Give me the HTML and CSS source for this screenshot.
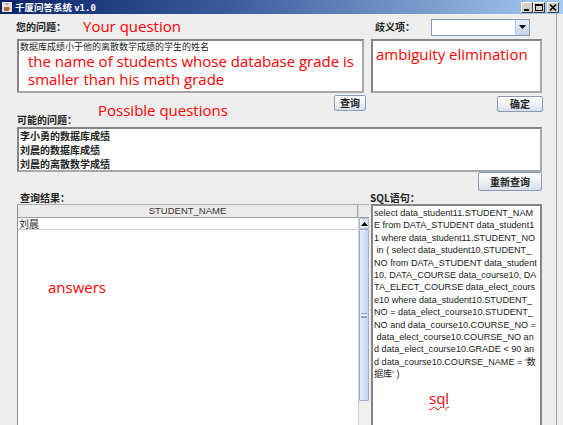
FILE: index.html
```html
<!DOCTYPE html>
<html>
<head>
<meta charset="utf-8">
<link rel="stylesheet" href="styles.css">
</head>
<body>
<div class="window">
  <div class="titlebar">
    <svg class="app-icon" width="10" height="10" viewBox="0 0 10 10">
      <rect x="0" y="0" width="10" height="10" fill="#e8e4dc"/>
      <path d="M2 5 h5 v3 a1 1 0 0 1 -1 1 h-3 a1 1 0 0 1 -1 -1z" fill="#c0603a"/>
      <path d="M7 6 h1 v1 h-1" stroke="#c0603a" stroke-width="0.8" fill="none"/>
      <path d="M4 1 q1 1 0 2 M5.5 1.5 q1 1 0 2" stroke="#5a6a9a" stroke-width="0.7" fill="none"/>
    </svg>
    <span class="title">千厦问答系统 <span class="ver">v1.0</span></span>
    <div class="win-btns">
      <div class="win-btn"><svg width="10" height="9" viewBox="0 0 10 9"><rect x="2" y="6" width="5" height="2" fill="#000"/></svg></div>
      <div class="win-btn"><svg width="10" height="9" viewBox="0 0 10 9"><rect x="1.5" y="1.5" width="7" height="6" fill="none" stroke="#000" stroke-width="1"/><rect x="1" y="1" width="8" height="2" fill="#000"/></svg></div>
      <div class="win-btn close"><svg width="10" height="9" viewBox="0 0 10 9"><path d="M2 1.5 L8 7.5 M8 1.5 L2 7.5" stroke="#000" stroke-width="1.6"/></svg></div>
    </div>
  </div>

  <div class="main">
    <div class="row-labels">
      <div class="left-col">
        <span class="label">您的问题：</span>
        <span class="note note-q">Your question</span>
      </div>
      <div class="right-col">
        <span class="label amb-label">歧义项：</span>
        <div class="combo">
          <div class="combo-field"></div>
          <div class="combo-arrow"><svg width="7" height="4" viewBox="0 0 7 4"><path d="M0 0 H7 L3.5 4z" fill="#000"/></svg></div>
        </div>
      </div>
    </div>

    <div class="row-areas">
      <div class="textarea question">
        <div class="cn-text">数据库成绩小于他的离散数学成绩的学生的姓名</div>
        <div class="note note-block">the name of students whose database grade is<br>smaller than his math grade</div>
      </div>
      <div class="textarea ambiguity">
        <div class="note">ambiguity elimination</div>
      </div>
    </div>

    <div class="row-mid">
      <div class="mid-left">
        <span class="label possible-label">可能的问题：</span>
        <span class="note note-p">Possible questions</span>
        <button class="btn btn-query">查询</button>
      </div>
      <div class="mid-right">
        <button class="btn btn-ok">确定</button>
      </div>
    </div>

    <div class="list">
      <div class="list-item">李小勇的数据库成绩</div>
      <div class="list-item">刘晨的数据库成绩</div>
      <div class="list-item">刘晨的离散数学成绩</div>
    </div>

    <div class="row-requery">
      <button class="btn btn-requery">重新查询</button>
    </div>

    <div class="row-labels2">
      <span class="label result-label">查询结果：</span>
      <span class="label sql-label">SQL语句：</span>
    </div>

    <div class="row-bottom">
      <div class="table-pane">
        <div class="table-main">
          <div class="thead">STUDENT_NAME</div>
          <div class="trow">刘晨</div>
          <div class="tbody-rest">
            <span class="note note-a">answers</span>
          </div>
        </div>
        <div class="vscroll">
          <div class="corner"></div>
          <div class="sb-up"><svg width="7" height="4" viewBox="0 0 7 4"><path d="M0 4 H7 L3.5 0z" fill="#000"/></svg></div>
          <div class="sb-thumb">
            <div class="grip"></div>
          </div>
          <div class="sb-track"></div>
        </div>
      </div>
      <div class="sql-area">
        <div class="sql-text">select data_student11.STUDENT_NAM<br>E from DATA_STUDENT data_student1<br>1 where data_student11.STUDENT_NO<br>&nbsp;in ( select data_student10.STUDENT_<br>NO from DATA_STUDENT data_student<br>10, DATA_COURSE data_course10, DA<br>TA_ELECT_COURSE data_elect_cours<br>e10 where data_student10.STUDENT_<br>NO = data_elect_course10.STUDENT_<br>NO and data_course10.COURSE_NO =<br>&nbsp;data_elect_course10.COURSE_NO an<br>d data_elect_course10.GRADE &lt; 90 an<br>d data_course10.COURSE_NAME = '数<br>据库' )</div>
        <div class="note note-sql">sql</div>
      </div>
    </div>
  </div>
</div>
</body>
</html>
```

FILE: styles.css
```css
* { box-sizing: border-box; }

body {
  margin: 0;
  width: 563px;
  height: 425px;
  overflow: hidden;
  background: #eeeeee;
  font-family: "Noto Sans CJK SC", "Liberation Sans", sans-serif;
}

.window {
  width: 563px;
  height: 425px;
  display: flex;
  flex-direction: column;
}

.titlebar {
  height: 14px;
  flex: none;
  display: flex;
  align-items: center;
  padding: 0 4px 0 2px;
  background: linear-gradient(to right, #0a246a 0%, #3a5a9a 40%, #a6caf0 100%);
}

.app-icon { flex: none; }

.title {
  color: #ffffff;
  font-weight: bold;
  font-size: 9.5px;
  line-height: 14px;
  margin-left: 3px;
  white-space: nowrap;
}

.title .ver {
  font-family: "DejaVu Sans Mono", monospace;
  font-size: 9px;
}

.win-btns {
  margin-left: auto;
  display: flex;
}

.win-btn {
  width: 12px;
  height: 11px;
  background: #d4d0c8;
  border: 1px solid;
  border-color: #ffffff #404040 #404040 #ffffff;
  display: flex;
  align-items: center;
  justify-content: center;
}

.win-btn svg { display: block; }
.win-btn.close { margin-left: 2px; }

.main {
  flex: 1;
  width: 557px;
  border-right: 1px solid #a0a0a0;
  padding-left: 17px;
  display: flex;
  flex-direction: column;
  overflow: hidden;
}

.label {
  font-size: 10px;
  font-weight: bold;
  color: #222222;
  line-height: 12px;
  white-space: nowrap;
}

.note {
  font-family: "Open Sans", "Noto Sans", sans-serif;
  font-size: 15px;
  color: #ff0000;
  line-height: 18px;
  white-space: nowrap;
}

/* Row 1 */
.row-labels {
  height: 25px;
  display: flex;
  flex: none;
}

.left-col {
  width: 354px;
  display: flex;
  align-items: center;
}

.left-col .label { margin-left: -1px; }
.note-q { margin-left: 17px; margin-top: -2px; }

.right-col {
  display: flex;
  align-items: center;
}

.amb-label { margin-left: 4px; }

.combo {
  margin-left: 16px;
  margin-top: 1px;
  width: 99px;
  height: 17px;
  display: flex;
  border: 1px solid #7f9db9;
  background: #ffffff;
}

.combo-field { flex: 1; }

.combo-arrow {
  width: 14px;
  background: linear-gradient(#e8f0fb, #c4d4ec);
  border-left: 1px solid #b6c6de;
  display: flex;
  align-items: center;
  justify-content: center;
}

/* Row 2 */
.row-areas {
  height: 54px;
  display: flex;
  gap: 7px;
  flex: none;
}

.textarea {
  background: #ffffff;
  border: 2px solid #858585;
  border-right-color: #a8a8a8;
  border-bottom-color: #a8a8a8;
}

.question {
  width: 347px;
  padding: 0 0 0 1px;
}

.cn-text {
  font-size: 9px;
  line-height: 11px;
  color: #222222;
}

.note-block {
  margin-left: 8px;
  line-height: 18px;
}

.ambiguity {
  width: 171px;
  padding: 4px 0 0 3px;
}

/* Row 3-4 */
.row-mid {
  height: 34px;
  display: flex;
  flex: none;
}

.mid-left {
  width: 354px;
  display: grid;
  grid-template-columns: 81px 1fr auto;
  grid-template-rows: 19px 15px;
}

.possible-label {
  grid-column: 1;
  grid-row: 2;
  align-self: center;
}

.note-p {
  grid-column: 2;
  grid-row: 1 / span 2;
  align-self: start;
  margin-top: 8px;
}

.btn-query {
  grid-column: 3;
  grid-row: 1;
  margin-top: 2px;
  margin-right: 5px;
  width: 32px;
}

.mid-right {
  width: 172px;
  display: flex;
  justify-content: flex-end;
  align-items: flex-start;
}

.btn-ok {
  margin-top: 3px;
  width: 46px;
}

.btn {
  height: 16px;
  padding: 0;
  font-family: "Noto Sans CJK SC", sans-serif;
  font-size: 10px;
  font-weight: bold;
  color: #222222;
  line-height: 12px;
  background: linear-gradient(#ffffff 0%, #f0f3f8 45%, #d6dfec 100%);
  border: 1px solid #8a9ab2;
  border-radius: 2px;
}

/* list */
.list {
  width: 525px;
  height: 45px;
  flex: none;
  background: #ffffff;
  border: 2px solid #858585;
  border-right-color: #a8a8a8;
  border-bottom-color: #a8a8a8;
  padding-top: 0;
}

.list-item {
  font-size: 10px;
  font-weight: bold;
  line-height: 14px;
  color: #222222;
  padding-left: 1px;
}

.row-requery {
  width: 525px;
  height: 19px;
  flex: none;
  display: flex;
  justify-content: flex-end;
}

.btn-requery {
  width: 64px;
  height: 19px;
}

.row-labels2 {
  height: 13px;
  flex: none;
  display: flex;
  align-items: center;
}

.result-label { margin-left: 3px; }
.sql-label { margin-left: 300px; }

/* bottom */
.row-bottom {
  flex: 1;
  display: flex;
  gap: 2px;
  width: 525px;
}

.table-pane {
  width: 352px;
  display: flex;
  border-left: 1px solid #8a8a8a;
  border-top: 1px solid #b0b0b0;
  background: #ffffff;
}

.table-main {
  flex: 1;
  display: flex;
  flex-direction: column;
}

.thead {
  height: 13px;
  background: #ebebeb;
  border-bottom: 1px solid #a0a0a0;
  border-right: 1px solid #a0a0a0;
  font-family: "Liberation Sans", sans-serif;
  font-size: 9.5px;
  line-height: 12px;
  color: #333333;
  text-align: center;
}

.trow {
  height: 12px;
  font-size: 10px;
  line-height: 11px;
  color: #222222;
  padding-left: 1px;
  border-bottom: 1px solid #cfcfcf;
}

.tbody-rest {
  flex: 1;
  padding: 44px 0 0 30px;
}

.vscroll {
  width: 11px;
  display: flex;
  flex-direction: column;
  background: #f0f0f0;
  border-left: 1px solid #d0d0d0;
}

.corner {
  height: 13px;
  background: #ebebeb;
  border-bottom: 1px solid #a0a0a0;
}

.sb-up {
  height: 11px;
  background: linear-gradient(to right, #f4f8fd, #d4e0f0);
  border: 1px solid #a9bbd6;
  display: flex;
  align-items: center;
  justify-content: center;
}

.sb-thumb {
  height: 172px;
  background: linear-gradient(to right, #e6eefa, #c6d6ee);
  border: 1px solid #99b0d2;
  border-radius: 1px;
  display: flex;
  align-items: center;
  justify-content: center;
}

.grip {
  width: 6px;
  height: 5px;
  border-top: 1px solid #8aa2c8;
  border-bottom: 1px solid #8aa2c8;
  background: linear-gradient(#fff 0 1px, #8aa2c8 1px 2px, #fff 2px 3px);
  background-size: 6px 3px;
  background-position: 0 1px;
  background-repeat: no-repeat;
}

.sb-track { flex: 1; }

.sql-area {
  width: 171px;
  background: #ffffff;
  border: 2px solid #858585;
  border-bottom: none;
  padding: 1px 0 0 1px;
  margin-top: 0;
}

.sql-text {
  font-family: "Liberation Sans", "Noto Sans CJK SC", sans-serif;
  font-size: 9.1px;
  line-height: 12.4px;
  color: #222222;
  white-space: nowrap;
}

.note-sql {
  margin: 8px 0 0 55px;
  text-decoration: underline wavy #ff0000;
  text-decoration-thickness: 1px;
  text-underline-offset: 2px;
}
```
